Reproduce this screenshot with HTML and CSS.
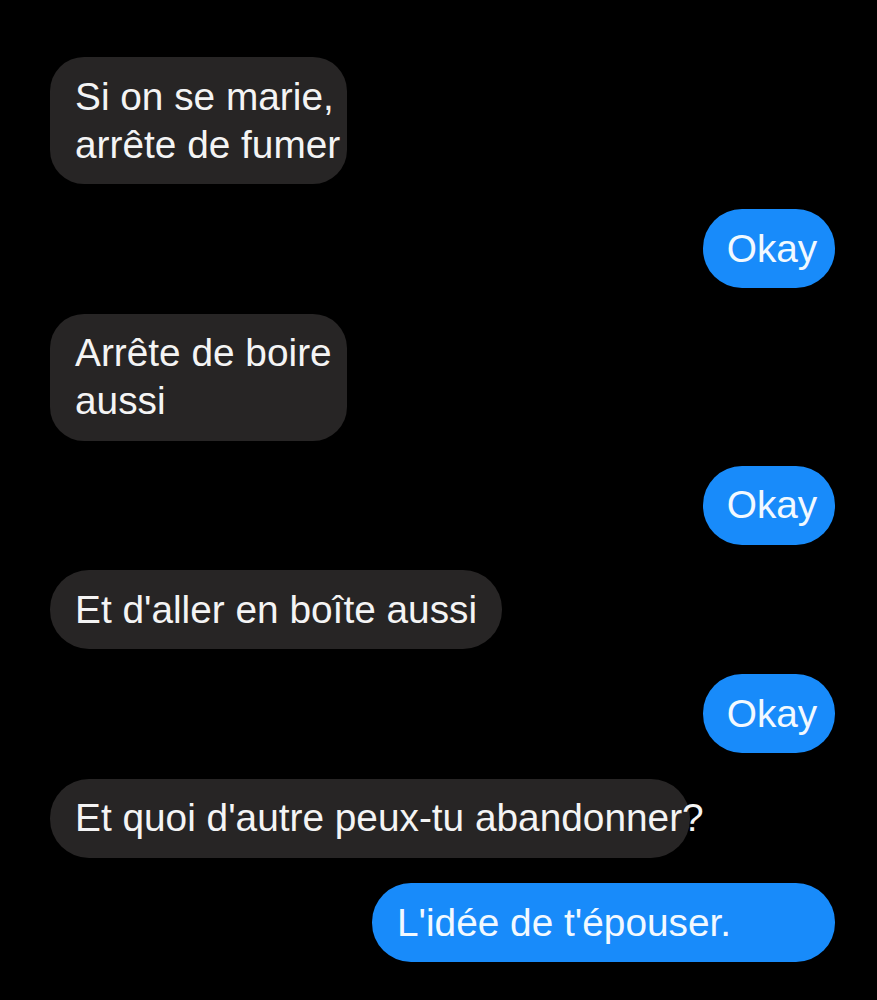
FILE: index.html
```html
<!DOCTYPE html>
<html lang="fr">
<head>
<meta charset="utf-8">
<title>Messages</title>
<link rel="stylesheet" href="styles.css">
</head>
<body>
<main class="chat">
  <div class="bubble in wrap">Si on se marie,<br>arrête de fumer</div>
  <div class="bubble out okay">Okay</div>
  <div class="bubble in wrap">Arrête de boire<br>aussi</div>
  <div class="bubble out okay">Okay</div>
  <div class="bubble in">Et d'aller en boîte aussi</div>
  <div class="bubble out okay">Okay</div>
  <div class="bubble in long">Et quoi d'autre peux-tu abandonner?</div>
  <div class="bubble out last">L'idée de t'épouser.</div>
</main>
</body>
</html>
```
FILE: styles.css
```css
html, body {
  margin: 0;
  padding: 0;
  background: #000;
}

body {
  font-family: "Liberation Sans", Arial, sans-serif;
  width: 877px;
  height: 1000px;
  overflow: hidden;
}

.chat {
  display: flex;
  flex-direction: column;
  gap: 25.3px;
  padding: 57px 42px 0 50px;
}

.bubble {
  box-sizing: border-box;
  font-size: 38.8px;
  line-height: 48px;
  padding: 15.5px 25px;
  border-radius: 39px;
  white-space: nowrap;
  color: #f4f4f4;
}

.in {
  align-self: flex-start;
  background: #272525;
}

.out {
  align-self: flex-end;
  background: #188bfa;
  color: #f2f9ff;
}

.wrap {
  width: 297px;
  padding-right: 0;
  border-radius: 34px;
}

.okay {
  width: 132px;
  padding: 15.5px 0 15.5px 6px;
  text-align: center;
}

.long {
  width: 640px;
  padding-right: 0;
}

.last {
  width: 463px;
}
```
